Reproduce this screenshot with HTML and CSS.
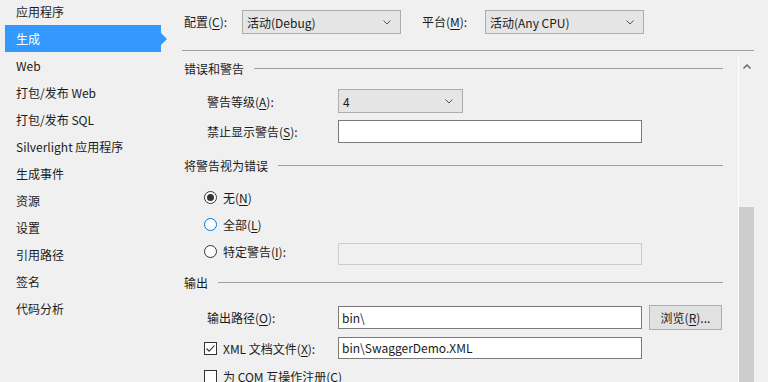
FILE: index.html
```html
<!DOCTYPE html>
<html lang="zh-CN">
<head>
    <meta charset="UTF-8" />
    <title>项目属性 - 生成</title>
    <link rel="stylesheet" href="styles.css">
</head>
<body>
    <div class="page">
        <nav class="nav">
            <div class="nav-item">应用程序</div>
            <div class="nav-item active">生成</div>
            <div class="nav-item">Web</div>
            <div class="nav-item">打包/发布 Web</div>
            <div class="nav-item">打包/发布 SQL</div>
            <div class="nav-item">Silverlight 应用程序</div>
            <div class="nav-item">生成事件</div>
            <div class="nav-item">资源</div>
            <div class="nav-item">设置</div>
            <div class="nav-item">引用路径</div>
            <div class="nav-item">签名</div>
            <div class="nav-item">代码分析</div>
        </nav>

        <div class="main">
            <div class="topbar">
                <label class="top-label">配置(<u>C</u>):</label>
                <div class="select top-select">
                    <span>活动(Debug)</span>
                    <svg class="chevron" width="8" height="5" viewBox="0 0 8 5"><path d="M0.5 0.5 L4 4 L7.5 0.5" fill="none" stroke="#555" stroke-width="1"/></svg>
                </div>
                <label class="top-label platform">平台(<u>M</u>):</label>
                <div class="select top-select">
                    <span>活动(Any CPU)</span>
                    <svg class="chevron" width="8" height="5" viewBox="0 0 8 5"><path d="M0.5 0.5 L4 4 L7.5 0.5" fill="none" stroke="#555" stroke-width="1"/></svg>
                </div>
            </div>

            <div class="body">
                <div class="content">
                    <div class="group-head first"><span>错误和警告</span><i class="rule"></i></div>
                    <div class="row row-24 mt-11">
                        <label class="field-label">警告等级(<u>A</u>):</label>
                        <div class="select level-select">
                            <span>4</span>
                            <svg class="chevron" width="8" height="5" viewBox="0 0 8 5"><path d="M0.5 0.5 L4 4 L7.5 0.5" fill="none" stroke="#555" stroke-width="1"/></svg>
                        </div>
                    </div>
                    <div class="row row-24 mt-6">
                        <label class="field-label">禁止显示警告(<u>S</u>):</label>
                        <div class="textbox"></div>
                    </div>

                    <div class="group-head mt-12"><span>将警告视为错误</span><i class="rule"></i></div>
                    <div class="check-row mt-9">
                        <span class="radio checked"></span>
                        <span class="check-label">无(<u>N</u>)</span>
                    </div>
                    <div class="check-row">
                        <span class="radio hover"></span>
                        <span class="check-label">全部(<u>L</u>)</span>
                    </div>
                    <div class="check-row">
                        <div class="check-group">
                            <span class="radio"></span>
                            <span class="check-label">特定警告(<u>I</u>):</span>
                        </div>
                        <div class="textbox disabled low"></div>
                    </div>

                    <div class="group-head mt-7"><span>输出</span><i class="rule"></i></div>
                    <div class="row row-25 mt-13">
                        <label class="field-label">输出路径(<u>O</u>):</label>
                        <div class="textbox">bin\</div>
                        <button class="btn">浏览(<u>R</u>)...</button>
                    </div>
                    <div class="check-row row-24 mt-6">
                        <div class="check-group">
                            <span class="checkbox checked">
                                <svg width="11" height="11" viewBox="0 0 11 11"><path d="M1.5 5.5 L4.2 8.2 L9.5 2.5" fill="none" stroke="#333" stroke-width="1.1"/></svg>
                            </span>
                            <span class="check-label">XML 文档文件(<u>X</u>):</span>
                        </div>
                        <div class="textbox short">bin\SwaggerDemo.XML</div>
                    </div>
                    <div class="check-row row-24 mt-4">
                        <span class="checkbox"></span>
                        <span class="check-label">为 COM 互操作注册(<u>C</u>)</span>
                    </div>
                </div>

                <div class="scrollbar">
                    <svg class="scroll-up" width="8" height="5" viewBox="0 0 8 5"><path d="M0.5 4.5 L4 1 L7.5 4.5" fill="none" stroke="#606060" stroke-width="1.4"/></svg>
                    <div class="thumb"></div>
                </div>
            </div>
        </div>
    </div>
</body>
</html>
```

FILE: styles.css
```css
* {
    box-sizing: border-box;
    margin: 0;
    padding: 0;
}

html, body {
    height: 100%;
    overflow: hidden;
}

body {
    background: #f0f0f0;
    font-family: "Noto Sans CJK SC", "Noto Sans", sans-serif;
    font-size: 12px;
    color: #1b1b1b;
}

u {
    text-decoration: underline;
    text-underline-offset: 2px;
}

.page {
    display: flex;
    height: 382px;
}

/* left navigation */
.nav {
    width: 182px;
    flex-shrink: 0;
    padding-left: 5px;
    margin-top: -2px;
}

.nav-item {
    position: relative;
    width: 156px;
    height: 27px;
    line-height: 27px;
    padding-left: 11px;
    white-space: nowrap;
}

.nav-item.active {
    background: #3399ff;
    color: #fff;
}

.nav-item.active::after {
    content: "";
    position: absolute;
    left: 156px;
    top: 8px;
    border-left: 6px solid #3399ff;
    border-top: 6px solid transparent;
    border-bottom: 6px solid transparent;
}

/* main area */
.main {
    width: 572px;
    flex-shrink: 0;
    display: flex;
    flex-direction: column;
}

.topbar {
    flex-shrink: 0;
    height: 51px;
    padding: 10px 0 0 2px;
    border-bottom: 1px solid #a0a0a0;
    display: flex;
    align-items: flex-start;
}

.top-label {
    width: 58px;
    line-height: 24px;
}

.top-label.platform {
    width: 63px;
    margin-left: 21px;
}

.select {
    display: flex;
    align-items: center;
    justify-content: space-between;
    height: 24px;
    padding: 0 9px 0 4px;
    background: #e5e5e5;
    border: 1px solid #adadad;
}

.top-select {
    width: 159px;
}

.chevron {
    display: block;
}

.body {
    flex: 1;
    min-height: 0;
    display: flex;
    overflow: hidden;
}

.content {
    width: 541px;
    display: flex;
    flex-direction: column;
}

.content > * {
    flex-shrink: 0;
}

.group-head {
    display: flex;
    align-items: center;
    height: 20px;
    padding-left: 2px;
}

.group-head.first {
    margin-top: 7px;
}

.group-head .rule {
    flex: 1;
    height: 1px;
    background: #a0a0a0;
    margin-left: 10px;
}

.row {
    display: flex;
    align-items: center;
    padding-left: 25px;
}

.field-label {
    width: 131px;
    white-space: nowrap;
}

.level-select {
    width: 125px;
}

.textbox {
    width: 304px;
    height: 23px;
    padding-left: 3px;
    line-height: 21px;
    background: #fff;
    border: 1px solid #7a7a7a;
}

.textbox.short {
    height: 22px;
    line-height: 20px;
}

.textbox.disabled {
    background: #f0f0f0;
    border-color: #cccccc;
}

.textbox.low {
    height: 22px;
    align-self: flex-end;
}

.btn {
    width: 73px;
    height: 25px;
    margin-left: 7px;
    background: #e1e1e1;
    border: 1px solid #adadad;
    font: inherit;
    color: inherit;
}

.check-row {
    display: flex;
    align-items: center;
    height: 27px;
    padding-left: 22px;
}

.check-group {
    width: 134px;
    display: flex;
    align-items: center;
    align-self: center;
}

.check-label {
    margin-left: 6px;
    white-space: nowrap;
}

.radio {
    width: 13px;
    height: 13px;
    border: 1px solid #333;
    border-radius: 50%;
    background: #fff;
    display: flex;
    align-items: center;
    justify-content: center;
    flex-shrink: 0;
}

.radio.checked::after {
    content: "";
    width: 7px;
    height: 7px;
    border-radius: 50%;
    background: #333;
}

.radio.hover {
    border-color: #0078d7;
}

.checkbox {
    width: 13px;
    height: 13px;
    border: 1px solid #333;
    background: #fff;
    display: flex;
    align-items: center;
    justify-content: center;
    flex-shrink: 0;
}

.checkbox svg {
    display: block;
}

/* row sizes and spacing */
.row-24 { height: 24px; }
.row-25 { height: 25px; }

.mt-4 { margin-top: 4px; }
.mt-6 { margin-top: 6px; }
.mt-7 { margin-top: 7px; }
.mt-9 { margin-top: 9px; }
.mt-11 { margin-top: 11px; }
.mt-12 { margin-top: 12px; }
.mt-13 { margin-top: 13px; }

/* scrollbar */
.scrollbar {
    width: 16px;
    margin: 6px 0 0 15px;
    border-left: 1px solid #fff;
    display: flex;
    flex-direction: column;
    align-items: center;
}

.scroll-up {
    display: block;
    margin-top: 7px;
}

.thumb {
    width: 15px;
    margin-top: 138px;
    flex: 1;
    background: #cdcdcd;
}
```
